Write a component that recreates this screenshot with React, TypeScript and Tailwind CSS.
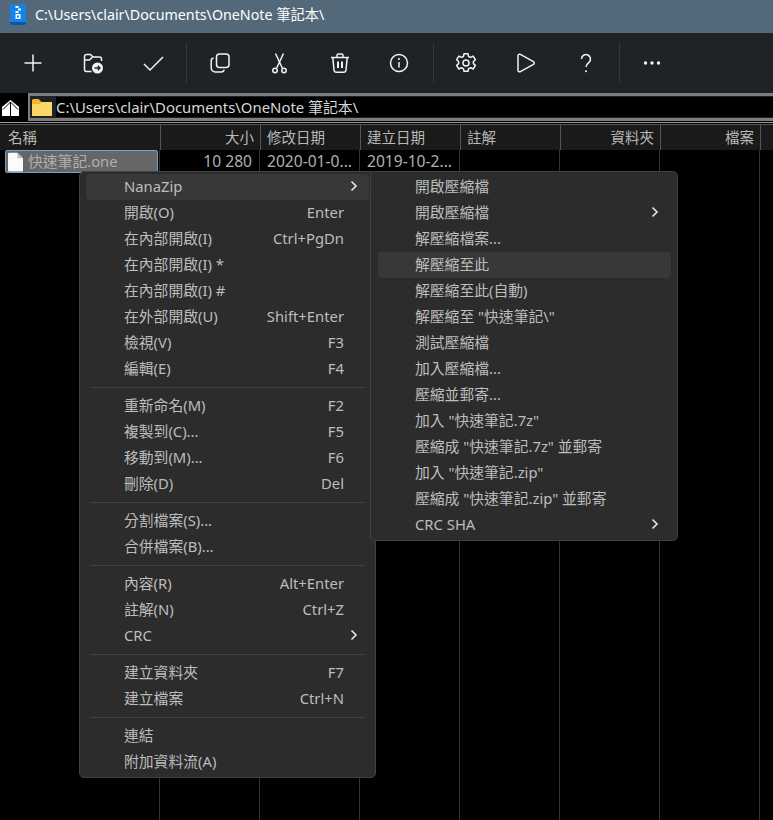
import React from 'react';

const font = { fontFamily: '"Noto Sans", "Noto Sans CJK TC", sans-serif' };

type Item = { label: string; key?: string; sub?: boolean; hot?: boolean };

const mainGroups: Item[][] = [
  [
    { label: 'NanaZip', sub: true, hot: true },
    { label: '開啟(O)', key: 'Enter' },
    { label: '在內部開啟(I)', key: 'Ctrl+PgDn' },
    { label: '在內部開啟(I) *' },
    { label: '在內部開啟(I) #' },
    { label: '在外部開啟(U)', key: 'Shift+Enter' },
    { label: '檢視(V)', key: 'F3' },
    { label: '編輯(E)', key: 'F4' },
  ],
  [
    { label: '重新命名(M)', key: 'F2' },
    { label: '複製到(C)...', key: 'F5' },
    { label: '移動到(M)...', key: 'F6' },
    { label: '刪除(D)', key: 'Del' },
  ],
  [{ label: '分割檔案(S)...' }, { label: '合併檔案(B)...' }],
  [
    { label: '內容(R)', key: 'Alt+Enter' },
    { label: '註解(N)', key: 'Ctrl+Z' },
    { label: 'CRC', sub: true },
  ],
  [
    { label: '建立資料夾', key: 'F7' },
    { label: '建立檔案', key: 'Ctrl+N' },
  ],
  [{ label: '連結' }, { label: '附加資料流(A)' }],
];

const subItems: Item[] = [
  { label: '開啟壓縮檔' },
  { label: '開啟壓縮檔', sub: true },
  { label: '解壓縮檔案...' },
  { label: '解壓縮至此', hot: true },
  { label: '解壓縮至此(自動)' },
  { label: '解壓縮至 "快速筆記\\"' },
  { label: '測試壓縮檔' },
  { label: '加入壓縮檔...' },
  { label: '壓縮並郵寄...' },
  { label: '加入 "快速筆記.7z"' },
  { label: '壓縮成 "快速筆記.7z" 並郵寄' },
  { label: '加入 "快速筆記.zip"' },
  { label: '壓縮成 "快速筆記.zip" 並郵寄' },
  { label: 'CRC SHA', sub: true },
];

const columns = [
  { title: '大小', right: true, cell: '10 280', w: 'w-[100px]' },
  { title: '修改日期', cell: '2020-01-0...', w: 'w-[100px]' },
  { title: '建立日期', cell: '2019-10-2...', w: 'w-[100px]' },
  { title: '註解', w: 'w-[100px]' },
  { title: '資料夾', right: true, w: 'w-[100px]' },
  { title: '檔案', right: true, w: 'w-[100px]' },
];

function Chevron() {
  return (
    <svg width="8" height="12" viewBox="0 0 8 12" fill="none" stroke="#e6e6e6" strokeWidth="1.6">
      <path d="M1.500 1.500 6 6l-4.500 4.500" />
    </svg>
  );
}

function Icon({ children }: { children: React.ReactNode }) {
  return (
    <div className="w-[60px] flex items-center justify-center">
      <svg width="24" height="24" viewBox="0 0 24 24" fill="none" stroke="#f2f2f2" strokeWidth="1.5">
        {children}
      </svg>
    </div>
  );
}

function Sep({ w }: { w: string }) {
  return (
    <div className={`${w} flex justify-center`}>
      <div className="w-px h-[40px] bg-[#33373a]" />
    </div>
  );
}

function Toolbar() {
  return (
    <div className="h-[60px] bg-[#202326] flex items-center pl-[3px] pb-[1px] shrink-0">
      <Icon>
        <path d="M12 3.500v17M3.500 12h17" />
      </Icon>
      <Icon>
        <path d="M10.500 20.500H5.500a2 2 0 0 1-2-2v-13a2 2 0 0 1 2-2h4l2.500 2.500h6.500a2 2 0 0 1 2 2v2" />
        <path d="M3.500 9h5l3-3" />
        <circle cx="16.500" cy="17" r="5.500" fill="#f2f2f2" stroke="none" />
        <path d="M13.500 17h5.500M16.800 14.800 19 17l-2.200 2.200" stroke="#202326" strokeWidth="1.300" />
      </Icon>
      <Icon>
        <path d="M3 13l6 6L22 6" />
      </Icon>
      <Sep w="w-[7px]" />
      <Icon>
        <rect x="8.500" y="3" width="12.500" height="13.500" rx="3" />
        <path d="M5.500 7A3 3 0 0 0 3.200 10v7a4 4 0 0 0 4 4h6a3 3 0 0 0 3-2.300" />
      </Icon>
      <Icon>
        <path d="M7.500 2.500 14.300 17M15.500 2.500 8.700 17" />
        <circle cx="7" cy="19.500" r="2.200" />
        <circle cx="16" cy="19.500" r="2.200" />
      </Icon>
      <Icon>
        <path d="M3 6.500h18M9 6.500V4.500a1.500 1.500 0 0 1 1.500-1.500h3a1.500 1.500 0 0 1 1.500 1.500v2" />
        <path d="M4.800 6.500 6 19a2.500 2.500 0 0 0 2.500 2.200h7A2.500 2.500 0 0 0 18 19l1.200-12.500" />
        <path d="M10 10.500v6.500M14 10.500v6.500" strokeWidth="2" />
      </Icon>
      <Icon>
        <circle cx="11" cy="12" r="8.500" />
        <path d="M11 11v5.500" />
        <circle cx="11" cy="8" r="1" fill="#f2f2f2" stroke="none" />
      </Icon>
      <Sep w="w-[6px]" />
      <Icon>
        <circle cx="12" cy="12" r="3" />
        <path d="M10 2.800h4l.6 2.700 2 .9 2.500-1.300 2.300 3.600-2 1.800v2.100l2 1.800-2.300 3.600-2.500-1.300-2 .9-.6 2.700h-4l-.6-2.700-2-.9-2.500 1.300-2.300-3.600 2-1.800v-2.100l-2-1.800 2.300-3.600 2.500 1.300 2-.9z" strokeLinejoin="round" />
      </Icon>
      <Icon>
        <path d="M4 4.800c0-1.300 1.300-2 2.400-1.400l13 7.200c1.100.6 1.100 2.200 0 2.800l-13 7.200C5.300 21.200 4 20.500 4 19.200z" />
      </Icon>
      <Icon>
        <path d="M7.500 8a4.500 4.500 0 1 1 7.500 3.400c-1.700 1.400-3 2.300-3 4.600" />
        <circle cx="12" cy="20.300" r="1" fill="#f2f2f2" stroke="none" />
      </Icon>
      <Sep w="w-[6px]" />
      <Icon>
        <circle cx="5.500" cy="12" r="1.700" fill="#f2f2f2" stroke="none" />
        <circle cx="12" cy="12" r="1.700" fill="#f2f2f2" stroke="none" />
        <circle cx="18.500" cy="12" r="1.700" fill="#f2f2f2" stroke="none" />
      </Icon>
    </div>
  );
}

function AddressBar() {
  return (
    <div className="h-[29px] bg-black flex shrink-0">
      <div className="w-[28px] pl-[2px] pt-[7px]">
        <svg width="17" height="16" viewBox="0 0 17 16">
          <path d="M8.500 0 17 7v9H0V7z" fill="#fff" />
          <path d="M1 9.500 8.500 2 16 9.500M8.500 2v14" fill="none" stroke="#000" strokeWidth="1" />
        </svg>
      </div>
      <div className="flex-1 h-[28px] border-l-2 border-y-[3px] border-[#7d7d7d] bg-[#1e2224] flex items-center">
        <svg className="ml-[2px] shrink-0" width="20" height="17" viewBox="0 0 20 17">
          <path d="M0 1.500A1.500 1.500 0 0 1 1.500 0h5l3 3H20v13a1 1 0 0 1-1 1H1a1 1 0 0 1-1-1z" fill="#f0b62f" />
          <path d="M0 5h8l2-2h10v13a1 1 0 0 1-1 1H1a1 1 0 0 1-1-1z" fill="#fbd968" />
        </svg>
        <div className="ml-[4px] flex-1 h-[20px] bg-black text-[#d8d8d8] text-[14.900px] leading-[20px] whitespace-nowrap">
          C:\Users\clair\Documents\OneNote 筆記本\
        </div>
      </div>
    </div>
  );
}

function FileList() {
  return (
    <div className="flex-1 flex flex-col bg-black border-t border-[#9a9a9a] pt-[1px]">
      <div className="h-[26px] flex bg-[#1a1a1a] text-[#b8b8b8] text-[14.500px] leading-[24px] border-t border-[#555] shrink-0">
        <div className="w-[161px] pl-[8px] border-r border-[#555]">名稱</div>
        {columns.map(c => (
          <div key={c.title} className={`${c.w} border-r border-[#555] px-[6px] ${c.right ? 'text-right' : 'text-left'}`}>
            {c.title}
          </div>
        ))}
      </div>
      <div className="flex-1 flex">
        <div className="w-[160px] border-r border-[#333] pl-[5px] pr-[1px]">
          <div className="h-[23px] bg-[#666666] border border-[#6aa6cc] rounded-[2px] flex items-center text-[#b0b0b0] text-[14.800px] whitespace-nowrap">
            <svg className="ml-[2px]" width="15" height="20" viewBox="0 0 16 20">
              <path d="M0 1a1 1 0 0 1 1-1h9l6 6v13a1 1 0 0 1-1 1H1a1 1 0 0 1-1-1z" fill="#fbfbfb" />
              <path d="M10 0v6h6" fill="#bdbdbd" />
            </svg>
            <span className="ml-[5px]">快速筆記.one</span>
          </div>
        </div>
        {columns.map(c => (
          <div
            key={c.title}
            className={`${c.w} border-r border-[#333] px-[7px] text-[#b0b0b0] text-[15.600px] leading-[22px] whitespace-nowrap ${c.right ? 'text-right' : 'text-left'}`}
          >
            {c.cell}
          </div>
        ))}
      </div>
    </div>
  );
}

function Row({ item, indent, keyPad }: { item: Item; indent: string; keyPad: string }) {
  return (
    <div className={`h-[26px] flex items-center rounded-[4px] pb-[2px] text-[14.800px] text-[#bdbdbd] whitespace-nowrap ${indent} ${item.hot ? 'bg-[#383838]' : ''}`}>
      <span className="flex-1">{item.label}</span>
      {item.key && <span className={keyPad}>{item.key}</span>}
      {item.sub && (
        <span className={keyPad}>
          <Chevron />
        </span>
      )}
    </div>
  );
}

function ContextMenu() {
  return (
    <div className="absolute left-[79px] top-[171px] w-[297px] bg-[#2c2c2c] border border-[#414141] rounded-[5px] px-[6px] py-[2px]">
      {mainGroups.map((group, i) => (
        <div key={i}>
          {i > 0 && <div className="h-[11px] flex items-center mx-[4px]"><div className="h-px w-full bg-[#414141]" /></div>}
          {group.map(item => (
            <Row key={item.label} item={item} indent="pl-[38px]" keyPad={item.sub ? 'pr-[11px]' : 'pr-[25px]'} />
          ))}
        </div>
      ))}
    </div>
  );
}

function SubMenu() {
  return (
    <div className="absolute left-[370px] top-[171px] w-[308px] bg-[#2c2c2c] border border-[#414141] rounded-[5px] pl-[7px] pr-[6px] py-[2px]">
      {subItems.map((item, i) => (
        <Row key={i} item={item} indent="pl-[37px]" keyPad="pr-[12px]" />
      ))}
    </div>
  );
}

export default function App() {
  return (
    <div className="relative w-[773px] h-[820px] overflow-hidden bg-black flex flex-col" style={font}>
      <div className="h-[33px] bg-[#53697a] flex items-center text-[#fff] text-[14.250px] pb-[4px] shrink-0">
        <svg className="ml-[10px]" width="16" height="21" viewBox="0 0 16 21">
          <rect width="16" height="21" rx="2" fill="#1583e6" />
          <path d="M0 18h16v1a2 2 0 0 1-2 2H2a2 2 0 0 1-2-2z" fill="#0b55ab" />
          <path d="M5.500 2h3v2h-3zM8 4.500h3v2H8zM5.500 7h3v2h-3zM5.500 10h5v5h-5z" fill="#fff" />
          <path d="M7 11.500h2v2H7z" fill="#1583e6" />
        </svg>
        <span className="ml-[9px]">C:\Users\clair\Documents\OneNote 筆記本\</span>
      </div>
      <Toolbar />
      <AddressBar />
      <FileList />
      <ContextMenu />
      <SubMenu />
    </div>
  );
}
